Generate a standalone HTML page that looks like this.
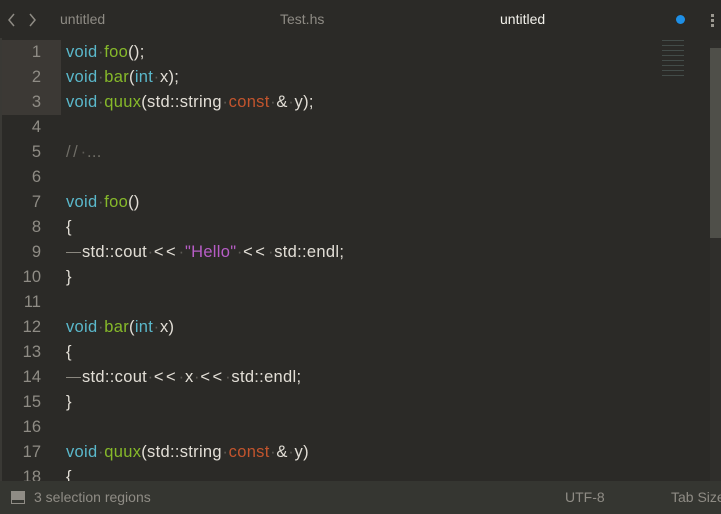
<!DOCTYPE html><html><head><style>
body{margin:0;width:721px;height:514px;background:#2b2a27;overflow:hidden;font-family:"Liberation Sans",sans-serif;position:relative}
.tabs{position:absolute;left:0;top:0;width:721px;height:38px;background:#2b2a27;font-size:14px;color:#8e8b84}
.tab{position:absolute;top:11px}
.ed{position:absolute;left:0;top:40px;width:721px}
.l{position:absolute;left:0;height:25px;line-height:25px;font-size:16.5px;color:#e2ded6;white-space:pre}
.n{position:absolute;left:0;width:41px;text-align:right;color:#8f8c85;font-size:16.5px}
.c{position:absolute;left:66px;letter-spacing:0.3px}
.k{color:#5ab8cb}.f{color:#86b92a}.o{color:#c2542d}.s{color:#b75dc6}.m{color:#6f6d66}.d{color:#5d5b55;margin:0 0.5px}
.ll{letter-spacing:2.5px}
.g{display:inline-block;width:15px;height:1px;background:#8a877f;vertical-align:middle;margin-right:1px}
.status{position:absolute;left:0;top:481px;width:721px;height:33px;background:#353631;font-size:14px;color:#8f8c85}
</style></head><body>
<div class="tabs">
<svg style="position:absolute;left:7px;top:12px" width="30" height="16"><path d="M7 2L2 8L7 14" stroke="#8e8b84" stroke-width="1.5" fill="none"/><path d="M23 2L28 8L23 14" stroke="#8e8b84" stroke-width="1.5" fill="none"/></svg>
<span class="tab" style="left:60px">untitled</span>
<span class="tab" style="left:280px">Test.hs</span>
<span class="tab" style="left:500px;color:#f2f0ea">untitled</span>
<div style="position:absolute;left:676px;top:15px;width:9px;height:9px;border-radius:50%;background:#1e8fe6"></div>
<div style="position:absolute;left:711px;top:14px;width:3px;height:3px;background:#9a978f;box-shadow:0 5px 0 #9a978f,0 10px 0 #9a978f"></div>
</div>
<div style="position:absolute;left:0;top:38px;width:2px;height:443px;background:#3a3935"></div>
<div style="position:absolute;left:2px;top:40px;width:59px;height:75px;background:#3c3935"></div>
<div style="position:absolute;left:710px;top:40px;width:11px;height:441px;background:#2f2e2b"></div>
<div style="position:absolute;left:710px;top:48px;width:11px;height:190px;background:#4f4f49"></div>
<div style="position:absolute;left:662px;top:40px;width:22px;height:40px;opacity:.35;background:repeating-linear-gradient(#6f8a88 0 1px,transparent 1px 5px)"></div>
<div class="ed">
<div class="l" style="top:0"><span class="n">1</span><span class="c"><span class="k">void</span><span class="d">·</span><span class="f">foo</span>();</span></div>
<div class="l" style="top:25px"><span class="n">2</span><span class="c"><span class="k">void</span><span class="d">·</span><span class="f">bar</span>(<span class="k">int</span><span class="d">·</span>x);</span></div>
<div class="l" style="top:50px"><span class="n">3</span><span class="c"><span class="k">void</span><span class="d">·</span><span class="f">quux</span>(std::string<span class="d">·</span><span class="o">const</span><span class="d">·</span>&amp;<span class="d">·</span>y);</span></div>
<div class="l" style="top:75px"><span class="n">4</span></div>
<div class="l" style="top:100px"><span class="n">5</span><span class="c m"><span class="ll">//</span><span class="d">·</span>...</span></div>
<div class="l" style="top:125px"><span class="n">6</span></div>
<div class="l" style="top:150px"><span class="n">7</span><span class="c"><span class="k">void</span><span class="d">·</span><span class="f">foo</span>()</span></div>
<div class="l" style="top:175px"><span class="n">8</span><span class="c">{</span></div>
<div class="l" style="top:200px"><span class="n">9</span><span class="c"><span class="g"></span>std::cout<span class="d">·</span><span class="ll">&lt;&lt;</span><span class="d">·</span><span class="s">"Hello"</span><span class="d">·</span><span class="ll">&lt;&lt;</span><span class="d">·</span>std::endl;</span></div>
<div class="l" style="top:225px"><span class="n">10</span><span class="c">}</span></div>
<div class="l" style="top:250px"><span class="n">11</span></div>
<div class="l" style="top:275px"><span class="n">12</span><span class="c"><span class="k">void</span><span class="d">·</span><span class="f">bar</span>(<span class="k">int</span><span class="d">·</span>x)</span></div>
<div class="l" style="top:300px"><span class="n">13</span><span class="c">{</span></div>
<div class="l" style="top:325px"><span class="n">14</span><span class="c"><span class="g"></span>std::cout<span class="d">·</span><span class="ll">&lt;&lt;</span><span class="d">·</span>x<span class="d">·</span><span class="ll">&lt;&lt;</span><span class="d">·</span>std::endl;</span></div>
<div class="l" style="top:350px"><span class="n">15</span><span class="c">}</span></div>
<div class="l" style="top:375px"><span class="n">16</span></div>
<div class="l" style="top:400px"><span class="n">17</span><span class="c"><span class="k">void</span><span class="d">·</span><span class="f">quux</span>(std::string<span class="d">·</span><span class="o">const</span><span class="d">·</span>&amp;<span class="d">·</span>y)</span></div>
<div class="l" style="top:425px"><span class="n">18</span><span class="c">{</span></div>
</div>
<div class="status">
<div style="position:absolute;left:11px;top:10px;width:12px;height:11px;border:1px solid #8f8c85;background:#8f8c85;box-shadow:inset 0 -3px 0 #353631"></div>
<span style="position:absolute;left:34px;top:8px">3 selection regions</span>
<span style="position:absolute;left:565px;top:8px">UTF-8</span>
<span style="position:absolute;left:671px;top:8px;white-space:nowrap">Tab Size</span>
</div>
</body></html>
